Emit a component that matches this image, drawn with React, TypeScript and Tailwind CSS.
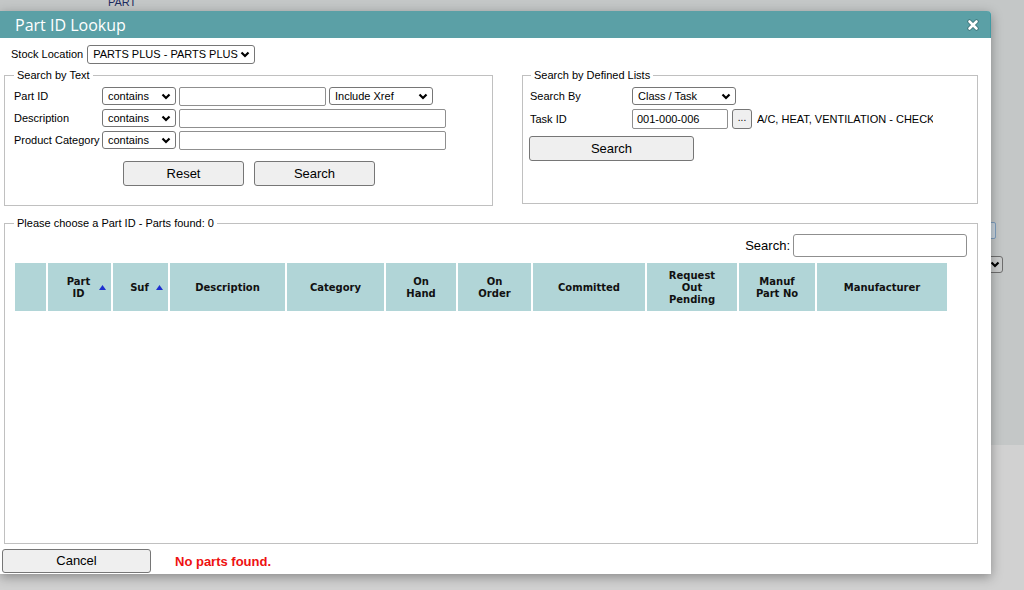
import React from 'react';

const sans = { fontFamily: '"Liberation Sans", Arial, sans-serif' };

function Chevron() {
  return (
    <svg width="10" height="7" viewBox="0 0 10 7" className="shrink-0">
      <path d="M1.5 1.5 L5 5 L8.5 1.5" fill="none" stroke="#000" strokeWidth="2.2" />
    </svg>
  );
}

function Select({ value, className }: { value: string; className: string }) {
  return (
    <div className={`flex items-center justify-between border border-[#767676] rounded-[3px] bg-white pl-[5px] pr-[4px] text-[11px] text-black ${className}`}>
      <span className="whitespace-nowrap">{value}</span>
      <Chevron />
    </div>
  );
}

function Input({ value, className }: { value?: string; className: string }) {
  return (
    <div className={`flex items-center border border-[#8f8f8f] rounded-[2px] bg-white pl-[3px] text-[11px] text-black ${className}`}>
      {value}
    </div>
  );
}

function Btn({ label, className }: { label: string; className: string }) {
  return (
    <button className={`flex items-center justify-center border border-[#767676] rounded-[3px] bg-[#efefef] text-[13px] text-black ${className}`}>
      {label}
    </button>
  );
}

function SortUp() {
  return (
    <svg width="7" height="5" viewBox="0 0 7 5" className="absolute right-[5px] top-[22px]">
      <path d="M0 5 L3.5 0 L7 5 Z" fill="#1d2fd0" />
    </svg>
  );
}

const cols = [
  { label: '' },
  { label: 'Part\nID', sort: true },
  { label: 'Suf', sort: true },
  { label: 'Description' },
  { label: 'Category' },
  { label: 'On\nHand' },
  { label: 'On\nOrder' },
  { label: 'Committed' },
  { label: 'Request\nOut\nPending' },
  { label: 'Manuf\nPart No' },
  { label: 'Manufacturer' },
];

export default function App() {
  return (
    <div className="relative w-[1024px] h-[590px] overflow-hidden flex flex-col" style={sans}>
      {/* page behind the modal */}
      <div className="h-[445px] bg-[#c4c7c7] flex flex-col">
        <span className="ml-[108px] -mt-[4px] text-[11px] leading-[13px] text-[#1c2b5e]">PART</span>
        <div className="ml-[982px] mt-[213px] w-[14px] h-[17px] border border-[#7f9fbf] rounded-[2px] bg-[#c9d3dc]" />
        <div className="ml-[982px] mt-[17px] w-[21px] h-[17px] border border-[#6e6e6e] rounded-[3px] bg-[#c9cbcb] flex items-center justify-end pr-[2px]">
          <Chevron />
        </div>
      </div>
      <div className="flex-1 bg-[#d1d1d1]" />

      {/* modal dialog */}
      <div className="absolute left-0 top-[11px] w-[991px] h-[563px] bg-white rounded-tr-[4px] shadow-[0_3px_12px_rgba(0,0,0,0.35)] flex flex-col">
        <div className="h-[27px] shrink-0 bg-[#5ba0a6] rounded-tr-[4px] border-r border-[#3f9aa3] flex items-center justify-between pl-[15px] pr-[11px]">
          <span className="text-[16px] text-white leading-none" style={{ fontFamily: '"Open Sans", "Noto Sans", sans-serif' }}>
            Part ID Lookup
          </span>
          <svg width="12" height="12" viewBox="0 0 12 12">
            <path d="M2.5 2.5 L9.5 9.5 M9.5 2.5 L2.5 9.5" stroke="#3b6f74" strokeWidth="4.2" strokeLinecap="round" />
            <path d="M2.5 2.5 L9.5 9.5 M9.5 2.5 L2.5 9.5" stroke="#ffffff" strokeWidth="2.6" strokeLinecap="round" />
          </svg>
        </div>

        {/* stock location */}
        <div className="mt-[7px] ml-[11px] flex items-center h-[19px] gap-[4px] text-[11px] text-black">
          <span>Stock Location</span>
          <Select value="PARTS PLUS - PARTS PLUS" className="w-[168px] h-[19px]" />
        </div>

        {/* search panels */}
        <div className="mt-[5px] ml-[4px] flex items-start">
          <fieldset className="w-[489px] h-[137px] border border-[#c0c0c0] pl-[9px] pt-[5px]">
            <legend className="px-[3px] text-[11px] leading-[13px] text-black">Search by Text</legend>
            <div className="flex flex-col gap-[4px] text-[11px] text-black">
              <div className="flex items-center h-[18px]">
                <span className="w-[88px]">Part ID</span>
                <Select value="contains" className="w-[74px] h-[18px]" />
                <Input className="ml-[3px] w-[147px] h-[19px]" />
                <Select value="Include Xref" className="ml-[3px] w-[104px] h-[18px]" />
              </div>
              <div className="flex items-center h-[18px]">
                <span className="w-[88px]">Description</span>
                <Select value="contains" className="w-[74px] h-[18px]" />
                <Input className="ml-[3px] w-[267px] h-[19px]" />
              </div>
              <div className="flex items-center h-[18px]">
                <span className="w-[88px]">Product Category</span>
                <Select value="contains" className="w-[74px] h-[18px]" />
                <Input className="ml-[3px] w-[267px] h-[19px]" />
              </div>
              <div className="mt-[8px] flex justify-center gap-[10px] pr-[8px]">
                <Btn label="Reset" className="w-[121px] h-[25px]" />
                <Btn label="Search" className="w-[121px] h-[25px]" />
              </div>
            </div>
          </fieldset>

          <fieldset className="ml-[29px] w-[456px] h-[135px] border border-[#c0c0c0] pl-[7px] pt-[5px]">
            <legend className="ml-[1px] px-[3px] text-[11px] leading-[13px] text-black">Search by Defined Lists</legend>
            <div className="flex flex-col text-[11px] text-black">
              <div className="flex items-center h-[18px]">
                <span className="w-[102px]">Search By</span>
                <Select value="Class / Task" className="w-[104px] h-[18px]" />
              </div>
              <div className="mt-[4px] flex items-center h-[20px]">
                <span className="w-[102px]">Task ID</span>
                <Input value="001-000-006" className="w-[96px] h-[20px] pl-[4px]" />
                <button className="ml-[4px] w-[20px] h-[20px] border border-[#767676] rounded-[3px] bg-[#efefef] text-[10px] leading-none pb-[3px]">...</button>
                <span className="ml-[5px] w-[176px] overflow-hidden whitespace-nowrap">A/C, HEAT, VENTILATION - CHECK</span>
              </div>
              <Btn label="Search" className="-ml-[1px] mt-[7px] w-[165px] h-[25px]" />
            </div>
          </fieldset>
        </div>

        {/* results */}
        <fieldset className="mt-[11px] ml-[4px] w-[974px] h-[327px] border border-[#c0c0c0] pl-[10px] pr-[10px] pt-[4px]">
          <legend className="px-[3px] -ml-[1px] text-[11px] leading-[13px] text-black">Please choose a Part ID - Parts found: 0</legend>
          <div className="flex items-center justify-end gap-[3px] h-[23px]">
            <span className="text-[13px] text-black">Search:</span>
            <div className="w-[174px] h-[23px] border border-[#8f8f8f] rounded-[3px] bg-white" />
          </div>
          <div
            className="mt-[6px] grid gap-[2px] h-[48px] w-[932px]"
            style={{ gridTemplateColumns: '31px 63px 55px 115px 97px 70px 73px 112px 90px 76px 130px' }}
          >
            {cols.map((c, i) => (
              <div
                key={i}
                className="relative bg-[#b1d5d7] flex items-center justify-center pt-[2px] text-center whitespace-pre-line text-[10px] leading-[12px] font-bold text-[#111]"
                style={{ fontFamily: '"DejaVu Sans", Verdana, sans-serif' }}
              >
                <span className={c.sort ? '-ml-[2px]' : ''}>{c.label}</span>
                {c.sort && <SortUp />}
              </div>
            ))}
          </div>
        </fieldset>

        {/* footer */}
        <div className="mt-[5px] ml-[2px] flex items-center h-[24px]">
          <Btn label="Cancel" className="w-[149px] h-[24px]" />
          <span className="ml-[24px] pt-[1px] text-[13px] font-bold text-[#ee1111]">No parts found.</span>
        </div>
      </div>
    </div>
  );
}
